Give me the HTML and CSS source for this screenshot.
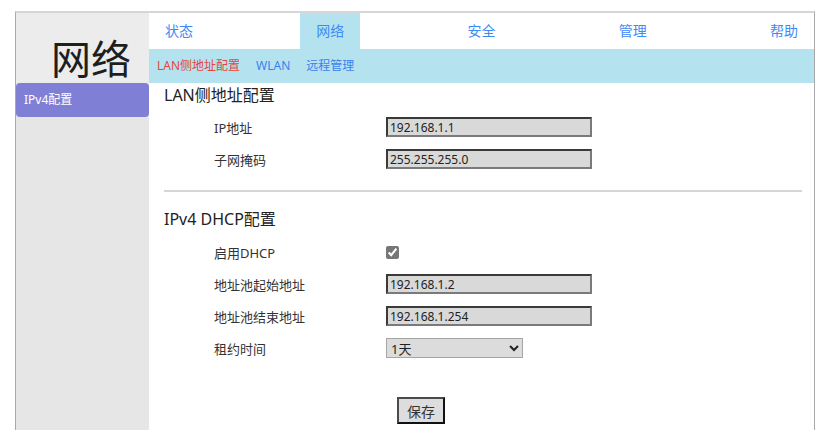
FILE: index.html
```html
<!DOCTYPE html>
<html lang="zh-CN">
<head>
<meta charset="utf-8">
<title>网络</title>
<link rel="stylesheet" href="styles.css">
</head>
<body>
<div class="frame">
  <aside class="side">
    <div class="brand">网络</div>
    <a class="side-item active" href="#">IPv4配置</a>
  </aside>
  <main class="main">
    <nav class="tabs">
      <a href="#">状态</a>
      <a href="#" class="on">网络</a>
      <a href="#">安全</a>
      <a href="#">管理</a>
      <a href="#">帮助</a>
    </nav>
    <nav class="subnav">
      <a href="#" class="on">LAN侧地址配置</a>
      <a href="#">WLAN</a>
      <a href="#">远程管理</a>
    </nav>
    <section class="content">
      <h2 class="sec-title">LAN侧地址配置</h2>
      <div class="form first">
        <div class="row"><label class="lbl">IP地址</label><input class="field" type="text" value="192.168.1.1"></div>
        <div class="row"><label class="lbl">子网掩码</label><input class="field" type="text" value="255.255.255.0"></div>
      </div>
      <hr class="divider">
      <h2 class="sec-title">IPv4 DHCP配置</h2>
      <div class="form second">
        <div class="row"><label class="lbl">启用DHCP</label><input class="check" type="checkbox" checked></div>
        <div class="row"><label class="lbl">地址池起始地址</label><input class="field" type="text" value="192.168.1.2"></div>
        <div class="row"><label class="lbl">地址池结束地址</label><input class="field" type="text" value="192.168.1.254"></div>
        <div class="row"><label class="lbl">租约时间</label>
          <select class="pick"><option>1天</option><option>2天</option><option>7天</option></select>
        </div>
      </div>
      <div class="actions"><button class="save" type="button">保存</button></div>
    </section>
  </main>
</div>
</body>
</html>
```
FILE: styles.css
```css
html, body {
  margin: 0;
  padding: 0;
  background: #fff;
  overflow: hidden;
}
body {
  font-family: "Noto Sans", "Noto Sans CJK SC", sans-serif;
  color: #222;
}
a { text-decoration: none; }

.frame {
  margin: 11px 0 0 15px;
  width: 800px;
  box-sizing: border-box;
  min-height: 440px;
  border-top: 2px solid #d6d6d6;
  border-left: 1px solid #a9a9a9;
  border-right: 1px solid #a9a9a9;
  display: grid;
  grid-template-columns: 133px 1fr;
}

.side {
  background: #e6e6e6;
  display: flex;
  flex-direction: column;
}
.brand {
  height: 70px;
  box-sizing: border-box;
  background: #ececec;
  padding: 24px 0 0 35px;
  font-family: "Noto Sans CJK SC", sans-serif;
  font-size: 40px;
  line-height: 40px;
  color: #1e1e1e;
}
.side-item {
  display: block;
  height: 34px;
  line-height: 34px;
  padding-left: 8px;
  font-size: 12px;
  color: #fff;
  background: #7f7fd5;
  border-radius: 4px;
}

.main {
  display: flex;
  flex-direction: column;
}
.tabs {
  height: 36px;
  display: flex;
  justify-content: space-between;
  background: #fff;
}
.tabs a {
  width: 60px;
  text-align: center;
  line-height: 36px;
  font-size: 14px;
  color: #3d8bf6;
}
.tabs a.on { background: #b4e3ef; }

.subnav {
  height: 34px;
  background: #b4e3ef;
  display: flex;
  gap: 16px;
  padding-left: 8px;
}
.subnav a {
  line-height: 34px;
  font-size: 12px;
  color: #3d7ff0;
}
.subnav a.on { color: #e8443f; }

.content {
  padding: 0 12px 0 15px;
}
.sec-title {
  margin: 0;
  height: 24px;
  line-height: 24px;
  font-size: 16px;
  font-weight: normal;
  color: #222;
}
.form.first { padding-top: 4px; }
.form.second { padding-top: 5px; }
.row {
  height: 32px;
  display: flex;
  align-items: center;
}
.lbl {
  flex: 0 0 222px;
  box-sizing: border-box;
  padding-left: 50px;
  font-size: 13px;
  color: #333;
}
.field {
  width: 206px;
  height: 20px;
  box-sizing: border-box;
  margin: 0;
  padding: 0 2px;
  border: 2px solid;
  border-color: #3a3a3a #7a7a7a #7a7a7a #3a3a3a;
  background: #d9d9d9;
  font-family: "Noto Sans", "Noto Sans CJK SC", sans-serif;
  font-size: 12px;
  color: #222;
  outline: none;
}
.check {
  width: 13px;
  height: 13px;
  margin: 0;
  accent-color: #767676;
}
.pick {
  width: 137px;
  height: 20px;
  margin: 0;
  padding: 0;
  border: 1px solid #a6a6a6;
  border-radius: 0;
  background: #dcdcdc;
  font-family: "Noto Sans", "Noto Sans CJK SC", sans-serif;
  font-size: 13px;
  color: #222;
}
.divider {
  margin: 15px 0;
  height: 2px;
  border: 0;
  background: #d6d6d6;
}
.actions {
  padding: 33px 0 0 233px;
}
.save {
  width: 48px;
  height: 27px;
  box-sizing: border-box;
  margin: 0;
  padding: 0;
  border: 2px solid;
  border-color: #4a4a4a #111 #111 #4a4a4a;
  background: #dddddd;
  font-family: "Noto Sans CJK SC", sans-serif;
  font-size: 14px;
  color: #333;
}
```
